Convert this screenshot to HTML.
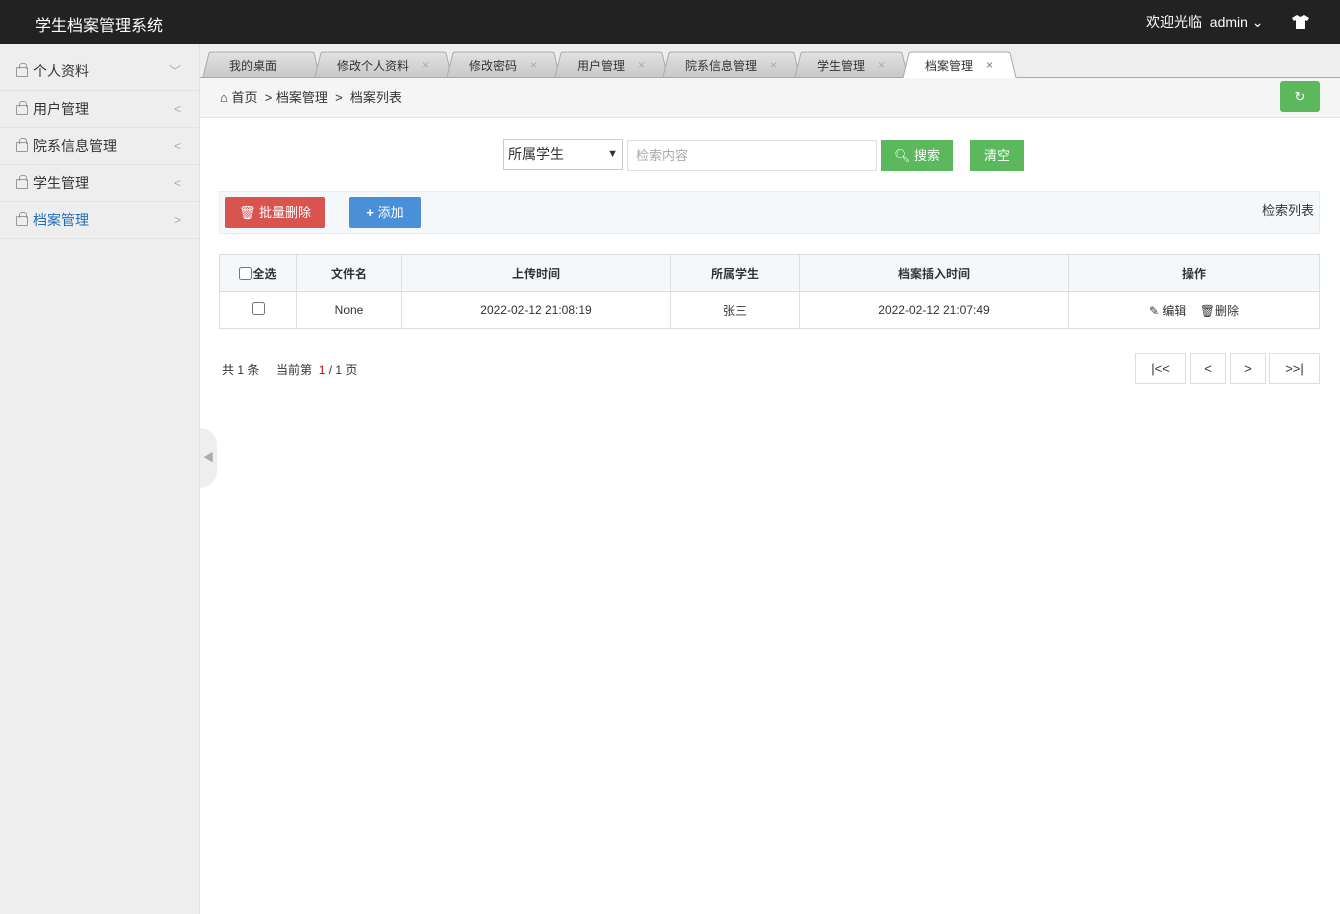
<!DOCTYPE html>
<html><head><meta charset="utf-8"><style>
*{margin:0;padding:0;box-sizing:border-box}
body{width:1340px;height:914px;overflow:hidden;font-family:"Liberation Sans","Noto Sans CJK SC",sans-serif;font-size:13px;color:#333;background:#fff;position:relative}
.top{position:absolute;left:0;top:0;width:1340px;height:44px;background:#222;color:#fff}
.top .logo{position:absolute;left:35px;top:12px;font-size:16px}
.top .r{position:absolute;left:1146px;top:12px;font-size:14px}
.side{position:absolute;left:0;top:44px;width:200px;height:870px;background:#eee;border-right:1px solid #e2e2e2}
.side .it{height:37px;border-bottom:1px solid #e2e2e2;position:relative;font-size:14px;line-height:37px;padding-left:33px}
.side .it .bag{position:absolute;left:16px;top:14px;width:12px;height:10px;border:1px solid #999;border-radius:1px}
.side .it .bag:before{content:"";position:absolute;left:2px;top:-5px;width:6px;height:5px;border:1px solid #999;border-bottom:0;border-radius:3px 3px 0 0}
.side .it .ar{position:absolute;right:18px;top:0;color:#aaa;font-size:12px}
.main{position:absolute;left:200px;top:44px;width:1140px;height:870px}
.tabbar{position:absolute;left:0;top:0;width:1140px;height:34px;background:#eee}
.crumb{position:absolute;left:0;top:34px;width:1140px;height:40px;background:#f5f5f5;border-bottom:1px solid #e5e5e5;font-size:13px;line-height:40px;padding-left:20px}
.refresh{position:absolute;left:1080px;top:37px;width:40px;height:31px;background:#5cb85c;border-radius:3px;color:#fff;text-align:center;line-height:31px;font-size:13px}
.sel{position:absolute;left:303px;top:95px;width:120px;height:31px;border:1px solid #ccc;background:#fff;font-size:14px;line-height:29px;padding-left:4px}
.inp{position:absolute;left:427px;top:96px;width:250px;height:31px;border:1px solid #ddd;color:#aaa;font-size:13px;line-height:29px;padding-left:8px}
.btn{position:absolute;color:#fff;font-size:13px;text-align:center;border-radius:2px}
.bar{position:absolute;left:19px;top:147px;width:1101px;height:43px;background:#f4f8fb;border:1px solid #e4ecf2}
table{position:absolute;left:19px;top:210px;width:1101px;border-collapse:collapse;font-size:12px}
td,th{border:1px solid #ddd;height:37px;text-align:center}
th{background:#f4f8fb;font-weight:bold}
.pg{position:absolute;top:309px;height:31px;border:1px solid #ddd;font-size:13px;text-align:center;line-height:29px}
</style></head><body>
<div class="top"><div class="logo">学生档案管理系统</div><div class="r">欢迎光临 &nbsp;admin ⌄</div>
<svg style="position:absolute;left:1292px;top:15px" width="17" height="14" viewBox="0 0 17 14"><path d="M5 0 L8.5 2 L12 0 L17 3 L15 6 L13 5 L13 14 L4 14 L4 5 L2 6 L0 3 Z" fill="#fff"/></svg></div>
<div class="side">
<div class="it" style="height:47px;line-height:54px"><span class="bag" style="top:23px"></span>个人资料<span class="ar">﹀</span></div>
<div class="it"><span class="bag"></span>用户管理<span class="ar">&lt;</span></div>
<div class="it"><span class="bag"></span>院系信息管理<span class="ar">&lt;</span></div>
<div class="it"><span class="bag"></span>学生管理<span class="ar">&lt;</span></div>
<div class="it" style="color:#1e6fb6"><span class="bag"></span>档案管理<span class="ar">&gt;</span></div>
</div>
<div style="position:absolute;left:200px;top:428px;width:17px;height:60px;background:#eee;border-radius:0 30px 30px 0/0 30px 30px 0;color:#aaa;font-size:11px;line-height:60px;padding-left:3px">◀</div>
<div class="main">
<div class="tabbar">
<svg width="1140" height="34" style="position:absolute;left:0;top:0" font-family="Liberation Sans,Noto Sans CJK SC,sans-serif" font-size="12">
<defs><linearGradient id="g" x1="0" y1="0" x2="0" y2="1"><stop offset="0" stop-color="#e2e2e2"/><stop offset="1" stop-color="#c9c9c9"/></linearGradient></defs>
<line x1="0" y1="33.5" x2="1140" y2="33.5" stroke="#aaa"/>
<g stroke="#aaa" fill="url(#g)">
<path d="M3 33 L9 9 Q10 8 12 8 L111 8 Q113 8 114 9 L120 33"/>
<path d="M115 33 L121 9 Q122 8 124 8 L243 8 Q245 8 246 9 L252 33"/>
<path d="M247 33 L253 9 Q254 8 256 8 L351 8 Q353 8 354 9 L360 33"/>
<path d="M355 33 L361 9 Q362 8 364 8 L459 8 Q461 8 462 9 L468 33"/>
<path d="M463 33 L469 9 Q470 8 472 8 L591 8 Q593 8 594 9 L600 33"/>
<path d="M595 33 L601 9 Q602 8 604 8 L699 8 Q701 8 702 9 L708 33"/>
<path d="M703 34 L709 9 Q710 8 712 8 L807 8 Q809 8 810 9 L816 34" fill="#fff"/>
</g>
<g fill="#333"><text x="29" y="26">我的桌面</text><text x="137" y="26">修改个人资料</text><text x="269" y="26">修改密码</text><text x="377" y="26">用户管理</text><text x="485" y="26">院系信息管理</text><text x="617" y="26">学生管理</text><text x="725" y="26">档案管理</text></g>
<g fill="#aaa"><text x="222" y="25">×</text><text x="330" y="25">×</text><text x="438" y="25">×</text><text x="570" y="25">×</text><text x="678" y="25">×</text><text x="786" y="25" fill="#777">×</text></g>
</svg></div>
<div class="crumb">⌂ 首页 &nbsp;&gt; 档案管理 &nbsp;&gt; &nbsp;档案列表</div>
<div class="refresh">↻</div>
<div class="sel">所属学生<span style="position:absolute;right:4px;font-size:11px">▼</span></div>
<div class="inp">检索内容</div>
<div class="btn" style="left:681px;top:96px;width:72px;height:31px;line-height:31px;background:#5cb85c;border-radius:0">🔍︎ 搜索</div>
<div class="btn" style="left:770px;top:96px;width:54px;height:31px;line-height:31px;background:#5cb85c;border-radius:0">清空</div>
<div class="bar"><div style="position:absolute;right:5px;top:8px;font-size:13px">检索列表</div></div>
<div class="btn" style="left:25px;top:153px;width:100px;height:31px;line-height:31px;background:#d9534f;font-size:13px">🗑 批量删除</div>
<div class="btn" style="left:149px;top:153px;width:72px;height:31px;line-height:31px;background:#4a90d9;font-size:13px"><b>+</b> 添加</div>
<table>
<tr><th style="width:77px"><input type="checkbox" style="vertical-align:-2px">全选</th><th style="width:105px">文件名</th><th style="width:269px">上传时间</th><th style="width:129px">所属学生</th><th style="width:269px">档案插入时间</th><th>操作</th></tr>
<tr><td><input type="checkbox"></td><td>None</td><td>2022-02-12 21:08:19</td><td>张三</td><td>2022-02-12 21:07:49</td><td>✎ 编辑 &nbsp;&nbsp; 🗑删除</td></tr>
</table>
<div style="position:absolute;left:22px;top:317px;font-size:12px">共 1 条 &nbsp;&nbsp;&nbsp; 当前第 &nbsp;<span style="color:#c00">1</span> / 1 页</div>
<div class="pg" style="left:935px;width:51px">|&lt;&lt;</div>
<div class="pg" style="left:990px;width:36px">&lt;</div>
<div class="pg" style="left:1030px;width:36px">&gt;</div>
<div class="pg" style="left:1069px;width:51px">&gt;&gt;|</div>
</div>
</body></html>
